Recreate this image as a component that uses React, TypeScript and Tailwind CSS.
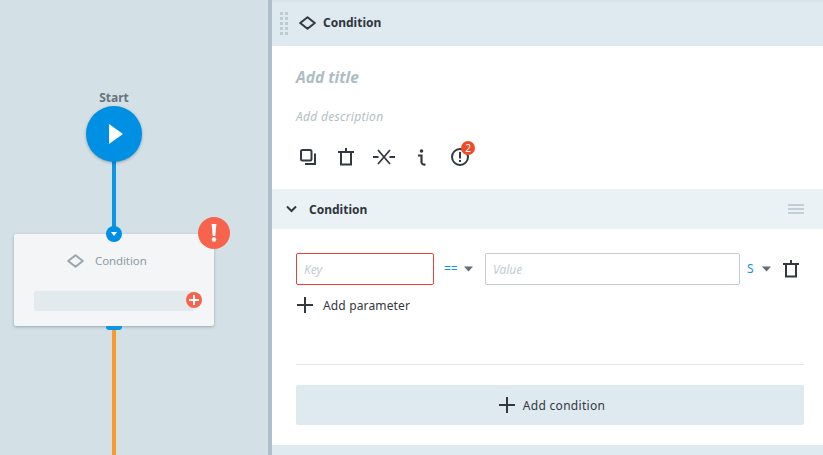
import React from "react";

const dark = "#33393f";

function Diamond({ color = dark }: { color?: string }) {
  return (
    <svg width="17" height="14" viewBox="0 0 17 14" fill="none" stroke={color} strokeWidth="2" className="shrink-0">
      <path d="M8.5 1.2 15.8 7 8.5 12.8 1.2 7Z" strokeLinejoin="round" />
    </svg>
  );
}

function Trash() {
  return (
    <svg width="16" height="18" viewBox="0 0 16 18" fill="none" stroke={dark} strokeWidth="2" className="shrink-0">
      <path d="M0 4h16M3 4v12.500h10V4M8 0v4" />
    </svg>
  );
}

function Plus() {
  return (
    <svg width="16" height="16" viewBox="0 0 16 16" stroke={dark} strokeWidth="2" className="shrink-0">
      <path d="M0 8h16M8 0v16" />
    </svg>
  );
}

function Caret() {
  return (
    <svg width="9" height="6" viewBox="0 0 9 6" fill="#5f6e78" className="shrink-0">
      <path d="M0 .5h9L4.500 5.500Z" />
    </svg>
  );
}

function Canvas() {
  return (
    <div className="relative w-[268px] shrink-0 bg-[#d3e0e6]">
      <div className="absolute left-[112px] top-[160px] w-[4px] h-[70px] bg-[#0d96e6]" />
      <div className="absolute left-[112px] top-[328px] w-[4px] h-[127px] bg-[#fb9a2c]" />
      <div className="absolute left-[86px] top-[90px] w-[56px] text-center text-[12px] leading-[16px] font-bold text-[#66747d]">
        Start
      </div>
      <div className="absolute left-[86px] top-[106px] w-[56px] h-[56px] rounded-full bg-[#0090e3] shadow-[0_1px_3px_rgba(0,0,0,0.3)] flex items-center justify-center">
        <svg width="16" height="20" viewBox="0 0 16 20" fill="#fff" className="ml-[3px]">
          <path d="M1 0 15 10 1 20Z" />
        </svg>
      </div>
      <div className="absolute left-[14px] top-[234px] w-[200px] h-[92px] rounded-[2px] bg-[#f3f5f7] shadow-[0_1px_3px_rgba(40,60,80,0.35)]">
        <div className="flex items-center gap-[11px] pt-[18px] pl-[53px] h-[36px]">
          <Diamond color="#98a6ae" />
          <span className="text-[11.5px] tracking-[-0.1px] text-[#8d9ba4]">Condition</span>
        </div>
        <div className="mx-[20px] mt-[21px] h-[20px] rounded-[2px] bg-[#e3eaee]" />
      </div>
      <div className="absolute left-[106px] top-[226px] w-[16px] h-[16px] rounded-full bg-[#0090e3] flex items-center justify-center">
        <svg width="6" height="4" viewBox="0 0 6 4" fill="#fff"><path d="M0 0h6L3 4Z" /></svg>
      </div>
      <div className="absolute left-[106px] top-[326px] w-[16px] h-[4px] rounded-b-[3px] bg-[#0d96e6]" />
      <div className="absolute left-[186px] top-[292px] w-[16px] h-[16px] rounded-full bg-[#f8634d] flex items-center justify-center">
        <svg width="10" height="10" viewBox="0 0 10 10" stroke="#fff" strokeWidth="2"><path d="M0 5h10M5 0v10" /></svg>
      </div>
      <div className="absolute left-[198px] top-[217px] w-[32px] h-[32px] rounded-full bg-[#f8634d] flex items-center justify-center">
        <svg width="6" height="18" viewBox="0 0 6 18" fill="#fff">
          <path d="M.6 0h4.800L4.300 12H1.700Z" />
          <circle cx="3" cy="15.500" r="2.200" />
        </svg>
      </div>
    </div>
  );
}

function Toolbar() {
  return (
    <div className="flex items-center mt-[20px] ml-[4px] h-[20px]">
      <svg width="16" height="16" viewBox="0 0 16 16" fill="none" stroke={dark} strokeWidth="2" className="shrink-0">
        <rect x="1" y="1" width="10.500" height="10.500" rx="1.500" />
        <path d="M15 4.500V15H5" />
      </svg>
      <span className="ml-[22px]"><Trash /></span>
      <svg width="22" height="16" viewBox="0 0 22 16" fill="none" stroke={dark} strokeWidth="1.800" className="ml-[19px] shrink-0">
        <path d="M0 8h5.500M16.500 8H22M5 1l12 14M17 1 5 15" />
      </svg>
      <svg width="9" height="17" viewBox="0 0 9 17" fill="none" stroke={dark} strokeWidth="2.200" className="ml-[22px] shrink-0">
        <circle cx="4.500" cy="2" r="1.800" fill={dark} stroke="none" />
        <path d="M1 6.500h3.500V13c0 2 1.500 2.800 4 2.500" />
      </svg>
      <div className="relative ml-[25px] w-[18px] h-[18px] shrink-0">
        <svg width="18" height="18" viewBox="0 0 18 18" fill="none" stroke={dark} strokeWidth="2">
          <circle cx="9" cy="9" r="8" />
          <path d="M9 4v6.500M9 12v2" />
        </svg>
        <div className="absolute left-[10px] top-[-7px] w-[14px] h-[14px] rounded-full bg-[#ee4b2b] text-white text-[10px] leading-[14px] text-center">
          2
        </div>
      </div>
    </div>
  );
}

function Panel() {
  return (
    <div className="flex-1 min-w-0 flex flex-col bg-white">
      <div className="h-[46px] shrink-0 bg-[#dfe9f0] border-t-2 border-[#d8e4ea] flex items-center pl-[8px] pb-[2px]">
        <div className="grid grid-cols-2 gap-[2px] w-[8px] mr-[11px]">
          {Array.from({ length: 10 }).map((_, i) => (
            <div key={i} className="w-[3px] h-[3px] bg-[#bccad3]" />
          ))}
        </div>
        <Diamond />
        <span className="ml-[7px] text-[12px] font-bold text-[#2f353b]">Condition</span>
      </div>

      <div className="h-[143px] shrink-0 px-[24px] pt-[21px]">
        <div className="text-[15.500px] leading-[20px] italic font-bold text-[#aebcc4]">Add title</div>
        <div className="mt-[20px] text-[12px] leading-[20px] tracking-[0.3px] italic text-[#b3bfc6]">Add description</div>
        <Toolbar />
      </div>

      <div className="h-[40px] shrink-0 bg-[#ebf2f6] flex items-center pl-[14px] pr-[19px]">
        <svg width="11" height="8" viewBox="0 0 11 8" fill="none" stroke={dark} strokeWidth="2" className="shrink-0">
          <path d="M1 1.500 5.500 6 10 1.500" />
        </svg>
        <span className="ml-[12px] pt-[2px] text-[12px] font-bold text-[#2f353b]">Condition</span>
        <div className="ml-auto flex flex-col gap-[2px] w-[16px]">
          <div className="h-[2px] bg-[#c3ced5]" />
          <div className="h-[2px] bg-[#c3ced5]" />
          <div className="h-[2px] bg-[#c3ced5]" />
        </div>
      </div>

      <div className="flex-1 px-[24px] pr-[19px] flex flex-col">
        <div className="flex items-center mt-[24px] h-[32px]">
          <div className="w-[138px] h-[32px] shrink-0 rounded-[2px] border border-[#e8413c] px-[7px] text-[12px] leading-[31px] italic text-[#c3ccd2]">
            Key
          </div>
          <span className="ml-[10px] text-[12px] text-[#0d96e6] w-[16px]">==</span>
          <span className="ml-[4px]"><Caret /></span>
          <div className="ml-[12px] w-[255px] h-[32px] shrink-0 rounded-[2px] border border-[#c5cccf] px-[7px] text-[12px] leading-[31px] italic text-[#c3ccd2]">
            Value
          </div>
          <span className="ml-[7px] text-[12px] text-[#0d96e6] w-[6px]">S</span>
          <span className="ml-[9px]"><Caret /></span>
          <span className="ml-[12px] -mt-[1px] flex"><Trash /></span>
        </div>
        <div className="flex items-center mt-[12px] h-[16px] pl-[1px]">
          <Plus />
          <span className="ml-[10px] pt-[2px] text-[12px] tracking-[0.15px] text-[#33393f]">Add parameter</span>
        </div>
        <div className="mt-[51px] h-[1px] bg-[#e0e8ec]" />
        <div className="mt-[20px] h-[40px] rounded-[2px] bg-[#dfe9f0] flex items-center justify-center gap-[8px] pl-[4px]">
          <Plus />
          <span className="pt-[2px] text-[12px] tracking-[0.3px] text-[#33393f]">Add condition</span>
        </div>
        <div className="h-[20px]" />
      </div>
      <div className="h-[10px] shrink-0 bg-[#dfe9f0]" />
    </div>
  );
}

export default function App() {
  return (
    <div className="flex w-[823px] h-[455px] overflow-hidden font-['Noto_Sans',sans-serif]">
      <Canvas />
      <div className="w-[4px] shrink-0 bg-[#aebfc9]" />
      <Panel />
    </div>
  );
}
